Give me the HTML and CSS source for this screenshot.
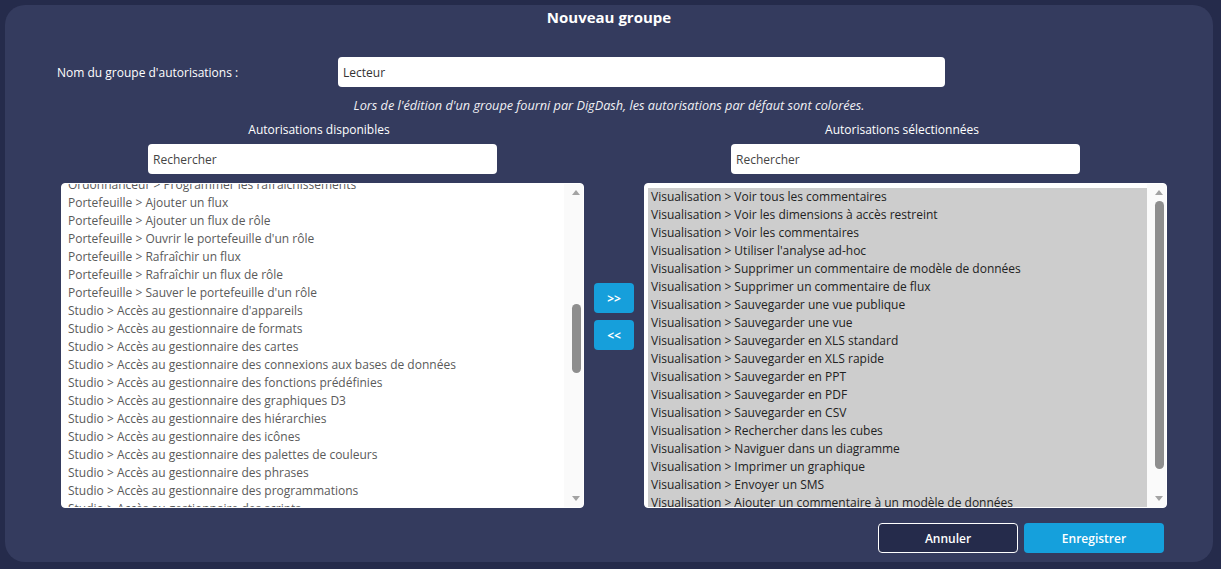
FILE: index.html
```html
<!DOCTYPE html>
<html lang="fr">
<head>
  <meta charset="UTF-8">
  <meta name="viewport" content="width=device-width, initial-scale=1.0">
  <title>Nouveau groupe</title>
  <link rel="stylesheet" href="styles.css">
</head>
<body>
  <div class="dialog">
    <h1 class="dialog-title">Nouveau groupe</h1>

    <div class="name-row">
      <label for="groupName">Nom du groupe d'autorisations :</label>
      <input type="text" id="groupName" class="text-input name-input" value="Lecteur">
    </div>

    <p class="note">Lors de l'édition d'un groupe fourni par DigDash, les autorisations par défaut sont colorées.</p>

    <div class="columns">
      <div class="column">
        <div class="column-title">Autorisations disponibles</div>
        <input type="text" class="text-input search-input" value="Rechercher">
        <div class="listbox">
          <div class="list-items">
            <div class="list-scroll available-scroll">
              <div class="option">Ordonnanceur &gt; Programmer les rafraîchissements</div>
              <div class="option">Portefeuille &gt; Ajouter un flux</div>
              <div class="option">Portefeuille &gt; Ajouter un flux de rôle</div>
              <div class="option">Portefeuille &gt; Ouvrir le portefeuille d'un rôle</div>
              <div class="option">Portefeuille &gt; Rafraîchir un flux</div>
              <div class="option">Portefeuille &gt; Rafraîchir un flux de rôle</div>
              <div class="option">Portefeuille &gt; Sauver le portefeuille d'un rôle</div>
              <div class="option">Studio &gt; Accès au gestionnaire d'appareils</div>
              <div class="option">Studio &gt; Accès au gestionnaire de formats</div>
              <div class="option">Studio &gt; Accès au gestionnaire des cartes</div>
              <div class="option">Studio &gt; Accès au gestionnaire des connexions aux bases de données</div>
              <div class="option">Studio &gt; Accès au gestionnaire des fonctions prédéfinies</div>
              <div class="option">Studio &gt; Accès au gestionnaire des graphiques D3</div>
              <div class="option">Studio &gt; Accès au gestionnaire des hiérarchies</div>
              <div class="option">Studio &gt; Accès au gestionnaire des icônes</div>
              <div class="option">Studio &gt; Accès au gestionnaire des palettes de couleurs</div>
              <div class="option">Studio &gt; Accès au gestionnaire des phrases</div>
              <div class="option">Studio &gt; Accès au gestionnaire des programmations</div>
              <div class="option">Studio &gt; Accès au gestionnaire des scripts</div>
              <div class="option">Studio &gt; Accès au gestionnaire des styles</div>
            </div>
          </div>
          <div class="scrollbar">
            <div class="scroll-arrow"><span class="arrow-up"></span></div>
            <div class="scroll-track"><div class="scroll-thumb thumb-available"></div></div>
            <div class="scroll-arrow"><span class="arrow-down"></span></div>
          </div>
        </div>
      </div>

      <div class="move-buttons">
        <button class="move-btn">&gt;&gt;</button>
        <button class="move-btn">&lt;&lt;</button>
      </div>

      <div class="column">
        <div class="column-title">Autorisations sélectionnées</div>
        <input type="text" class="text-input search-input" value="Rechercher">
        <div class="listbox">
          <div class="list-items selected">
            <div class="list-scroll">
              <div class="option">Visualisation &gt; Voir tous les commentaires</div>
              <div class="option">Visualisation &gt; Voir les dimensions à accès restreint</div>
              <div class="option">Visualisation &gt; Voir les commentaires</div>
              <div class="option">Visualisation &gt; Utiliser l'analyse ad-hoc</div>
              <div class="option">Visualisation &gt; Supprimer un commentaire de modèle de données</div>
              <div class="option">Visualisation &gt; Supprimer un commentaire de flux</div>
              <div class="option">Visualisation &gt; Sauvegarder une vue publique</div>
              <div class="option">Visualisation &gt; Sauvegarder une vue</div>
              <div class="option">Visualisation &gt; Sauvegarder en XLS standard</div>
              <div class="option">Visualisation &gt; Sauvegarder en XLS rapide</div>
              <div class="option">Visualisation &gt; Sauvegarder en PPT</div>
              <div class="option">Visualisation &gt; Sauvegarder en PDF</div>
              <div class="option">Visualisation &gt; Sauvegarder en CSV</div>
              <div class="option">Visualisation &gt; Rechercher dans les cubes</div>
              <div class="option">Visualisation &gt; Naviguer dans un diagramme</div>
              <div class="option">Visualisation &gt; Imprimer un graphique</div>
              <div class="option">Visualisation &gt; Envoyer un SMS</div>
              <div class="option">Visualisation &gt; Ajouter un commentaire à un modèle de données</div>
              <div class="option">Visualisation &gt; Accéder aux explorations</div>
            </div>
          </div>
          <div class="scrollbar">
            <div class="scroll-arrow"><span class="arrow-up"></span></div>
            <div class="scroll-track"><div class="scroll-thumb thumb-selected"></div></div>
            <div class="scroll-arrow"><span class="arrow-down"></span></div>
          </div>
        </div>
      </div>
    </div>

    <div class="footer">
      <button class="btn btn-cancel">Annuler</button>
      <button class="btn btn-save">Enregistrer</button>
    </div>
  </div>
</body>
</html>
```

FILE: styles.css
```css
* {
  box-sizing: border-box;
}
body {
  margin: 0;
  background-color: #252b4b;
  font-family: "Open Sans", Arial, sans-serif;
  font-size: 12px;
  color: #fff;
}
.dialog {
  width: 1208px;
  height: 557px;
  margin: 5px 0 0 5px;
  background-color: #343b5e;
  border-radius: 20px;
  display: flex;
  flex-direction: column;
}
.dialog-title {
  margin: 0;
  font-size: 15px;
  line-height: 24px;
  font-weight: 700;
  text-align: center;
}
.name-row {
  display: flex;
  align-items: center;
  margin-top: 28px;
  padding-left: 52px;
}
.name-row label {
  width: 281px;
}
.text-input {
  height: 30px;
  border: none;
  border-radius: 4px;
  background-color: #fff;
  padding: 0 5px;
  font-family: inherit;
  font-size: 12px;
  color: #333;
  outline: none;
}
.name-input {
  width: 607px;
}
.note {
  margin: 9px 0 0;
  text-align: center;
  font-size: 12.7px;
  font-style: italic;
  line-height: 18px;
  color: #f0f0f4;
}
.columns {
  display: flex;
  margin-top: 7px;
  padding-left: 56px;
}
.column {
  width: 523px;
  display: flex;
  flex-direction: column;
  align-items: center;
}
.column-title {
  line-height: 18px;
  padding-right: 7px;
}
.search-input {
  width: 349px;
  margin-top: 5px;
  color: #444;
}
.listbox {
  align-self: stretch;
  height: 325px;
  margin-top: 9px;
  background-color: #fff;
  border: 1px solid #fff;
  border-radius: 4px;
  display: flex;
  overflow: hidden;
}
.list-items {
  flex: 1;
  overflow: hidden;
  padding: 4px 0 0 3px;
}
.available-scroll {
  margin-top: -12px;
}
.option {
  height: 18px;
  line-height: 18px;
  padding-left: 3px;
  white-space: nowrap;
  color: #5a5a5a;
}
.selected .option {
  background-color: #cdcdcd;
  color: #222;
}
.scrollbar {
  width: 19px;
  display: flex;
  flex-direction: column;
  background-color: #fafafa;
}
.scroll-arrow {
  height: 17px;
  display: flex;
  align-items: center;
  padding-left: 8px;
}
.arrow-up, .arrow-down {
  width: 0;
  height: 0;
  border-left: 4px solid transparent;
  border-right: 4px solid transparent;
}
.arrow-up {
  border-bottom: 5px solid #a3a3a3;
}
.arrow-down {
  border-top: 5px solid #a3a3a3;
}
.scroll-track {
  flex: 1;
}
.scroll-thumb {
  width: 9px;
  margin-left: 8px;
  border-radius: 5px;
  background-color: #8e8e8e;
}
.thumb-available {
  margin-top: 103px;
  height: 69px;
}
.thumb-selected {
  height: 268px;
}
.move-buttons {
  width: 60px;
  display: flex;
  flex-direction: column;
  align-items: center;
  gap: 7px;
  padding-top: 162px;
}
.move-btn {
  width: 40px;
  height: 30px;
  border: none;
  border-radius: 4px;
  background-color: #169fdb;
  color: #fff;
  font-family: inherit;
  font-size: 12px;
  font-weight: 700;
  cursor: pointer;
}
.footer {
  display: flex;
  justify-content: flex-end;
  gap: 6px;
  margin-top: 15px;
  padding-right: 49px;
}
.btn {
  width: 140px;
  height: 30px;
  border-radius: 4px;
  font-family: inherit;
  font-size: 12px;
  font-weight: 600;
  color: #fff;
  cursor: pointer;
}
.btn-cancel {
  background-color: #252b4b;
  border: 1px solid #fff;
}
.btn-save {
  background-color: #15a0dc;
  border: none;
}
```
